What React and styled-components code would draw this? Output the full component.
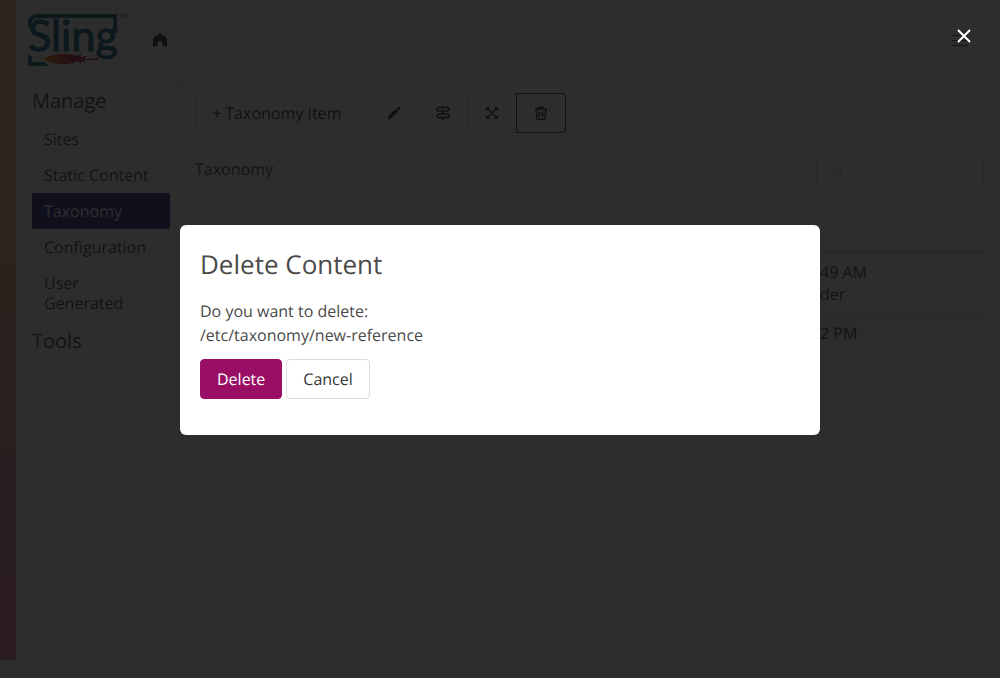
import React from 'react';
import styled, { createGlobalStyle } from 'styled-components';

const Global = createGlobalStyle`
  *, *::before, *::after { box-sizing: border-box; }
  body {
    margin: 0;
    background: #fff;
    color: #4a4a4a;
    font: 16px/24px "Open Sans", "Noto Sans", sans-serif;
    text-rendering: geometricPrecision;
  }
  button, input { font: inherit; text-rendering: inherit; }
  h2, h3, p, ul { margin: 0; padding: 0; font-weight: 400; }
`;

const Page = styled.div`
  display: grid;
  grid-template-columns: 16px minmax(0, 1fr);
  min-height: 100vh;
  padding-bottom: 18px;
`;

const Rail = styled.div`
  background: linear-gradient(#fac87d 0, #f5b98c 35%, #eb96a0 70%, #e682a5 100%);
`;

const Shell = styled.div`
  display: flex;
  flex-direction: column;
`;

const Header = styled.header`
  display: flex;
  align-items: center;
  gap: 22px;
  height: 81px;
  padding: 0 32px 0 12px;
  border-bottom: 1px solid #dbdbdb;
`;

const HomeLink = styled.a`
  display: flex;
  color: #363636;
`;

const Burger = styled.button`
  display: grid;
  gap: 4px;
  width: 16px;
  margin-left: auto;
  padding: 0;
  border: 0;
  background: none;

  span { height: 1px; background: #4a4a4a; }
`;

const Body = styled.div`
  display: grid;
  grid-template-columns: 167px minmax(0, 1fr);
  flex: 1;
`;

const Sidebar = styled.nav`
  padding: 8px 12px 0 16px;
  border-right: 1px solid #dbdbdb;
`;

const MenuTitle = styled.h2`
  font-size: 20px;
  line-height: 24px;
`;

const MenuList = styled.ul`
  list-style: none;
  padding: 8px 0;
`;

const MenuLink = styled.a`
  display: block;
  padding: 8px 12px;
  border-radius: 2px;
  line-height: 20px;
  text-decoration: none;
  color: ${(p) => (p.$active ? '#fff' : '#4a4a4a')};
  background: ${(p) => (p.$active ? '#303284' : 'transparent')};
`;

const Main = styled.main`
  padding: 12px 16px 0 12px;
`;

const Toolbar = styled.div`
  display: flex;
  gap: 11px;
`;

const ButtonGroup = styled.div`
  display: flex;
`;

const Button = styled.button`
  display: inline-flex;
  align-items: center;
  justify-content: center;
  height: 40px;
  padding: 0 16px;
  border: 1px solid ${(p) => (p.$primary ? '#990f66' : '#dbdbdb')};
  border-radius: 4px;
  color: ${(p) => (p.$primary ? '#fff' : '#363636')};
  background: ${(p) => (p.$primary ? '#990f66' : '#fff')};
`;

const IconButton = styled(Button)`
  width: 50px;
  margin-right: -1px;
  padding: 0;
  border-radius: 0;
  border-color: ${(p) => (p.$focused ? '#303284' : '#dbdbdb')};

  &:first-child { border-radius: 4px 0 0 4px; }
  &:last-child { border-radius: 0 4px 4px 0; margin-right: 0; }
`;

const TitleRow = styled.div`
  display: flex;
  justify-content: space-between;
  margin: 24px 0;
`;

const SearchBox = styled.label`
  display: flex;
  align-items: center;
  gap: 8px;
  width: 168px;
  height: 30px;
  padding: 0 16px;
  border: 1px solid #dbdbdb;
  border-radius: 2px;
  color: #cccccc;

  svg { flex: none; }
  input { width: 100%; min-width: 0; border: 0; outline: 0; background: none; }
`;

const Table = styled.table`
  width: 100%;
  border-collapse: collapse;
  table-layout: fixed;
  line-height: 22px;

  th { height: 41px; border-bottom: 2px solid #dbdbdb; }
  td { height: 61px; padding: 8px 0; vertical-align: top; border-bottom: 1px solid #dbdbdb; }
  tr:last-child td { border-bottom: 0; background: #f7f7f7; }
  th:last-child { width: 164px; }
`;

const Overlay = styled.div`
  position: fixed;
  inset: 0;
  display: flex;
  align-items: center;
  justify-content: center;
  padding-bottom: 18px;
  background: rgba(10, 10, 10, 0.86);
`;

const Dialog = styled.section`
  width: 640px;
  max-width: calc(100% - 40px);
  padding: 24px 20px 36px;
  border-radius: 6px;
  background: #fff;
`;

const DialogTitle = styled.h3`
  margin-bottom: 20px;
  font-size: 26px;
  line-height: 30px;
`;

const DialogActions = styled.div`
  display: flex;
  gap: 4px;
  margin-top: 12px;
`;

const CloseButton = styled.button`
  position: absolute;
  top: 20px;
  right: 20px;
  display: flex;
  align-items: center;
  justify-content: center;
  width: 32px;
  height: 32px;
  padding: 0;
  border: 0;
  background: none;
`;

const LogoDrawing = styled.svg`
  overflow: visible;
`;

const Logo = () => (
  <LogoDrawing width="102" height="56" viewBox="0 0 102 56" role="img" aria-label="Sling">
    <defs>
      <linearGradient id="feather">
        <stop offset="0" stopColor="#f69923" />
        <stop offset="0.5" stopColor="#cb2138" />
        <stop offset="1" stopColor="#7e2064" />
      </linearGradient>
    </defs>
    <g fill="none" stroke="#166a83" strokeWidth="4">
      <path d="M4 17C-1 9 3 4 11 4H87V19H80" />
      <path d="M0 42L4 45V50H15L22 54H0Z" fill="#166a83" stroke="none" />
    </g>
    <text x="0" y="39" fontFamily="Lato, sans-serif" fontSize="43" fill="#166a83" stroke="#166a83" strokeWidth="1">Sling</text>
    <path d="M16 47C22 41 40 41 50 44L53 42L53 45L59 44L56 47L70 46L70 48L56 48L58 51L53 49L53 52L50 49C40 54 22 53 16 47Z" fill="url(#feather)" />
    <text x="91" y="6" fontFamily="Open Sans, sans-serif" fontSize="6" fill="#4a4a4a">TM</text>
  </LogoDrawing>
);

const Pencil = () => (
  <svg width="14" height="14" viewBox="0 0 14 14" fill="currentColor" aria-hidden="true">
    <path d="M0.6 13.4L1.4 10L8.8 2.8L11.3 5.3L4 12.6ZM9.7 1.9L10.9 0.8Q11.4 0.3 12 0.8L13.3 2.1Q13.8 2.7 13.3 3.2L12.2 4.4Z" />
  </svg>
);

const Signs = () => (
  <svg width="14" height="14" viewBox="0 0 14 14" fill="none" stroke="currentColor" strokeWidth="1.6" aria-hidden="true">
    <path d="M2 1.5H11.5L13 3.2L11.5 5H2Q1 5 1 4V2.5Q1 1.5 2 1.5ZM12 8H2.5L1 9.8L2.5 11.6H12Q13 11.6 13 10.6V9Q13 8 12 8ZM7 0V1.5M7 5V8M7 12V14" />
  </svg>
);

const Expand = () => (
  <svg width="12" height="12" viewBox="0 0 12 12" aria-hidden="true">
    <path d="M2 2L10 10M10 2L2 10" stroke="currentColor" strokeWidth="1.4" />
    <path d="M0 4.2V0H4.2ZM7.8 0H12V4.2ZM12 7.8V12H7.8ZM4.2 12H0V7.8Z" fill="currentColor" />
  </svg>
);

const Trash = () => (
  <svg width="14" height="14" viewBox="0 0 14 14" fill="none" stroke="currentColor" strokeWidth="1.5" aria-hidden="true">
    <path d="M1 3H13M4.5 3L5.3 1H8.7L9.5 3M2.2 3.2L2.9 12Q3 13.2 4.2 13.2H9.8Q11 13.2 11.1 12L11.8 3.2M5.5 5.5V11M8.5 5.5V11" />
  </svg>
);

const manageItems = ['Sites', 'Static Content', 'Taxonomy', 'Configuration', 'User Generated'];

const actions = [
  { label: 'Edit', Icon: Pencil },
  { label: 'Reorder', Icon: Signs },
  { label: 'Move', Icon: Expand },
  { label: 'Delete item', Icon: Trash, focused: true },
];

export default function App() {
  return (
    <>
      <Global />
      <Page>
        <Rail />
        <Shell>
          <Header>
            <Logo />
            <HomeLink href="#home" aria-label="Home">
              <svg width="16" height="14" viewBox="0 0 16 14" fill="currentColor" aria-hidden="true">
                <path d="M8 0L14.3 4.6Q15 5.2 15 6V13.4H10.4V10Q10.4 8 8 8Q5.6 8 5.6 10V13.4H1V6Q1 5.2 1.7 4.6Z" />
              </svg>
            </HomeLink>
            <Burger type="button" aria-label="Menu">
              <span />
              <span />
              <span />
            </Burger>
          </Header>
          <Body>
            <Sidebar>
              <MenuTitle>Manage</MenuTitle>
              <MenuList>
                {manageItems.map((item) => (
                  <li key={item}>
                    <MenuLink href="#menu" $active={item === 'Taxonomy'}>{item}</MenuLink>
                  </li>
                ))}
              </MenuList>
              <MenuTitle>Tools</MenuTitle>
            </Sidebar>
            <Main>
              <Toolbar>
                <Button type="button">+ Taxonomy Item</Button>
                <ButtonGroup>
                  {actions.map(({ label, Icon, focused }) => (
                    <IconButton key={label} type="button" aria-label={label} $focused={focused}>
                      <Icon />
                    </IconButton>
                  ))}
                </ButtonGroup>
              </Toolbar>
              <TitleRow>
                <p>Taxonomy</p>
                <SearchBox>
                  <svg width="10" height="10" viewBox="0 0 10 10" fill="none" stroke="currentColor" aria-hidden="true">
                    <circle cx="4.5" cy="4.5" r="3.5" />
                    <path d="M7 7L9.5 9.5" />
                  </svg>
                  <input type="search" aria-label="Search" />
                </SearchBox>
              </TitleRow>
              <Table>
                <thead>
                  <tr><th /><th /></tr>
                </thead>
                <tbody>
                  <tr><td /><td>49 AM<br />der</td></tr>
                  <tr><td /><td>2 PM</td></tr>
                </tbody>
              </Table>
            </Main>
          </Body>
        </Shell>
      </Page>
      <Overlay>
        <Dialog role="dialog" aria-modal="true" aria-labelledby="dialog-title">
          <DialogTitle id="dialog-title">Delete Content</DialogTitle>
          <p>Do you want to delete:<br />/etc/taxonomy/new-reference</p>
          <DialogActions>
            <Button type="button" $primary>Delete</Button>
            <Button type="button">Cancel</Button>
          </DialogActions>
        </Dialog>
        <CloseButton type="button" aria-label="Close">
          <svg width="14" height="14" viewBox="0 0 14 14" stroke="#fff" strokeWidth="2" aria-hidden="true">
            <path d="M1 1L13 13M13 1L1 13" />
          </svg>
        </CloseButton>
      </Overlay>
    </>
  );
}
